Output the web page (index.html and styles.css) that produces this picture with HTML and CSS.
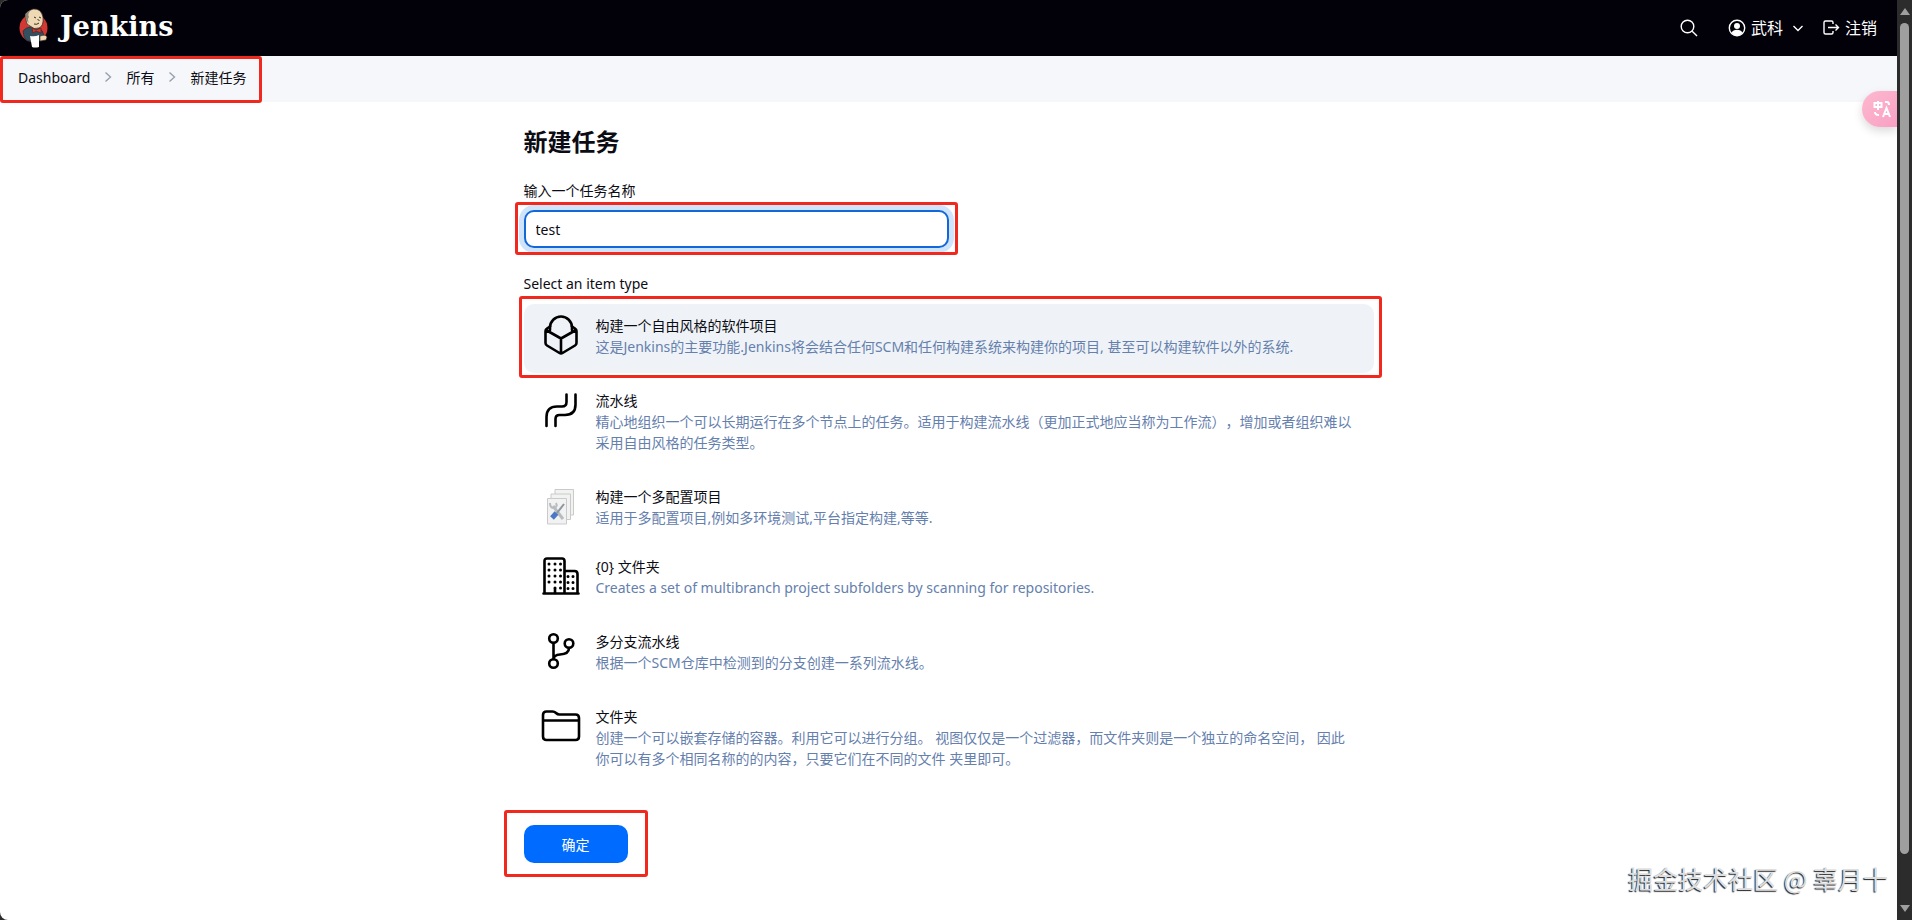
FILE: index.html
```html
<!DOCTYPE html>
<html lang="zh-CN">
<head>
    <meta charset="UTF-8">
    <meta name="viewport" content="width=device-width, initial-scale=1.0">
    <title>新建任务 - Jenkins</title>
    <link rel="stylesheet" href="styles.css">
</head>
<body>
    <div class="page">
        <header class="header">
            <a class="logo" href="#">
                <svg class="logo-img" viewBox="0 0 30 40" aria-hidden="true">
                    <circle cx="15.5" cy="20" r="14" fill="#d33833"/>
                    <path d="M5 23 Q8 19 13 19 L21 20 Q25 22 26 28 L24 33 H9 Q5 29 5 23Z" fill="#34505f" stroke="#1d2b33" stroke-width=".6"/>
                    <path d="M8 12 Q7 3 15 1 Q23 0 25 9 Q26 18 21 20 Q16 22 12 18 Q8 17 8 12Z" fill="#efd9b4" stroke="#3a2c22" stroke-width=".8"/>
                    <path d="M8 12 Q5 4 13 2 Q9 6 11 9 Q9 11 11 15Z" fill="#8a8171"/>
                    <path d="M16 9 l2 1 M21 9 l2 1 M19.500 11 l2 2 M16 16 q3 1 5-1" fill="none" stroke="#3a2c22"/>
                    <path d="M14 20 l4 2 5-2 v5 l-5-2 -3 2Z" fill="#d33833" stroke="#601914" stroke-width=".6"/>
                    <path d="M12 28 q5 1 9-1 v12 q-4 1-7 0Z" fill="#fff"/>
                    <path d="M22 28 q6-2 7 1 l-1 3 -6 1Z" fill="#efd9b4" stroke="#3a2c22" stroke-width=".6"/>
                </svg>
                <span class="logo-text">Jenkins</span>
            </a>
            <nav class="header-links">
                <button class="header-btn search" aria-label="搜索">
                    <svg width="18" height="18" viewBox="0 0 18 18"><circle cx="7.5" cy="7.5" r="6.3"/><path d="M12.2 12.2 L17 17"/></svg>
                </button>
                <a class="header-btn user" href="#">
                    <svg width="18" height="18" viewBox="0 0 18 18"><circle cx="9" cy="9" r="7.7"/><circle class="fill" cx="9" cy="7" r="3"/><path class="fill" d="M3.5 14 Q5 10.800 9 10.800 T14.500 14 Q9 19 3.500 14Z"/></svg>
                    武科
                </a>
                <button class="header-btn caret" aria-label="用户菜单">
                    <svg width="10" height="10" viewBox="0 0 10 10"><path d="M.5 3 L5 7.500 L9.500 3"/></svg>
                </button>
                <a class="header-btn" href="#">
                    <svg width="18" height="18" viewBox="0 0 18 18"><path d="M11 5 V3.500 Q11 2 9.500 2 H3.500 Q2 2 2 3.500 V13.500 Q2 15 3.500 15 H9.500 Q11 15 11 13.500 V12 M6 8.500 H16.500 M13.500 5.500 l3 3 -3 3"/></svg>
                    注销
                </a>
            </nav>
        </header>

        <nav class="breadcrumbs">
            <div class="crumb-list marked">
                <a href="#">Dashboard</a>
                <svg width="8" height="12" viewBox="0 0 8 12"><path d="M1.500 1.500 L6.500 6 L1.500 10.500"/></svg>
                <a href="#">所有</a>
                <svg width="8" height="12" viewBox="0 0 8 12"><path d="M1.500 1.500 L6.500 6 L1.500 10.500"/></svg>
                <a href="#">新建任务</a>
            </div>
        </nav>

        <main class="main">
            <form class="new-item">
                <h1>新建任务</h1>

                <label class="label" for="name">输入一个任务名称</label>
                <div class="name-box marked">
                    <input type="text" id="name" class="name-input" value="test">
                </div>

                <div class="label">Select an item type</div>
                <ul class="items">
                    <li class="item active marked">
                        <svg class="icon" viewBox="0 0 40 40"><path d="M9 15 V12.500 A11 11 0 0 1 31 12.500 V15"/><path d="M5 15 L20 23.500 L35 15 M20 23.500 V38 M9 11.500 L6 13.500 Q4.500 14.500 4.500 16 V28 Q4.500 29.500 6 30.500 L18.500 38 Q20 39 21.500 38 L34 30.500 Q35.500 29.500 35.500 28 V16 Q35.500 14.500 34 13.500 L31 11.500"/></svg>
                        <div class="item-text">
                            <div class="item-title">构建一个自由风格的软件项目</div>
                            <div class="item-desc">这是Jenkins的主要功能.Jenkins将会结合任何SCM和任何构建系统来构建你的项目, 甚至可以构建软件以外的系统.</div>
                        </div>
                    </li>
                    <li class="item">
                        <svg class="icon" viewBox="0 0 40 40"><path d="M5.500 36 V27 Q5.500 16.500 16 16.500 H21 Q25.500 16.500 25.500 12 V4.500 M14.500 36 V29 Q14.500 25 18.500 25 H24 Q34.500 25 34.500 14.500 V4.500"/></svg>
                        <div class="item-text">
                            <div class="item-title">流水线</div>
                            <div class="item-desc">精心地组织一个可以长期运行在多个节点上的任务。适用于构建流水线（更加正式地应当称为工作流），增加或者组织难以采用自由风格的任务类型。</div>
                        </div>
                    </li>
                    <li class="item compact">
                        <svg class="icon matrix" viewBox="0 0 40 40">
                            <g fill="#f1f2f1" stroke="#c9cbc9" stroke-width="1"><path d="M14 3.500 H32.500 V29 H14Z"/><path d="M10 8 H29.500 V33.500 H10Z"/><path d="M6.500 12.500 H25.500 V38 H6.500Z"/></g>
                            <path d="M12 20 L22 33" stroke="#b7bcc0" stroke-width="3"/>
                            <path d="M9 17 q0 5 4 5 q4-1 2-5" stroke="#b7bcc0" stroke-width="2"/>
                            <path d="M23 18 L16 27" stroke="#8e969d" stroke-width="2"/>
                            <path d="M15.500 27 L11 32" stroke="#4a78c4" stroke-width="5"/>
                        </svg>
                        <div class="item-text">
                            <div class="item-title">构建一个多配置项目</div>
                            <div class="item-desc">适用于多配置项目,例如多环境测试,平台指定构建,等等.</div>
                        </div>
                    </li>
                    <li class="item">
                        <svg class="icon" viewBox="0 0 40 40"><path d="M3.500 37.500 V5 Q3.500 2.500 6 2.500 H21 Q23.500 2.500 23.500 5 V37.500 M23.500 15 H33.500 Q36.500 15 36.500 18 V37.500 M2.500 37.500 H37.500"/><path class="dots" d="M8 8 V32 M14 8 V33 M19.500 8 V33 M27 20.500 V33 M32 20.500 V33"/><path d="M14 33 V37"/></svg>
                        <div class="item-text">
                            <div class="item-title">{0} 文件夹</div>
                            <div class="item-desc">Creates a set of multibranch project subfolders by scanning for repositories.</div>
                        </div>
                    </li>
                    <li class="item">
                        <svg class="icon" viewBox="0 0 40 40"><circle cx="12.500" cy="7.500" r="4.300"/><circle cx="12.500" cy="32.500" r="4.300"/><circle cx="28" cy="12.500" r="4.300"/><path d="M12.500 12 V28 Q13 24 19 23.500 Q28 23 28 17"/></svg>
                        <div class="item-text">
                            <div class="item-title">多分支流水线</div>
                            <div class="item-desc">根据一个SCM仓库中检测到的分支创建一系列流水线。</div>
                        </div>
                    </li>
                    <li class="item">
                        <svg class="icon" viewBox="0 0 40 40"><path d="M2 9 Q2 5.500 5.500 5.500 H11.500 Q13.500 5.500 15 7 Q16.500 8.500 18.500 8.500 H34.500 Q38 8.500 38 12 V30.500 Q38 34 34.500 34 H5.500 Q2 34 2 30.500Z M2 14.500 H38"/></svg>
                        <div class="item-text">
                            <div class="item-title">文件夹</div>
                            <div class="item-desc">创建一个可以嵌套存储的容器。利用它可以进行分组。 视图仅仅是一个过滤器，而文件夹则是一个独立的命名空间， 因此你可以有多个相同名称的的内容，只要它们在不同的文件 夹里即可。</div>
                        </div>
                    </li>
                </ul>

                <div class="submit-box marked">
                    <button type="button" class="submit">确定</button>
                </div>
            </form>
        </main>

        <button class="translate" aria-label="翻译">
            <svg width="18" height="18" viewBox="0 0 18 18"><path d="M1.500 3 H8.500 V7 H1.500Z M5 1 V10 M12 2 H14 Q16 2 16 5 M2 12 Q2 15 6 15 M10 17 L13.500 8 L17 17 M11.500 14 H15.500"/></svg>
        </button>
        <div class="watermark">掘金技术社区 @ 辜月十</div>
    </div>

    <div class="scrollbar">
        <span class="arrow-up"></span>
        <span class="thumb"></span>
        <span class="arrow-down"></span>
    </div>
</body>
</html>
```
FILE: styles.css
```css
* {
    box-sizing: border-box;
}
body {
    display: flex;
    min-height: 100vh;
    margin: 0;
    background: #2c2c2c;
    font-family: "Noto Sans", "Noto Sans CJK SC", sans-serif;
    font-size: 14px;
    line-height: 21px;
    text-spacing-trim: space-all;
    color: #0c0c14;
}
a {
    color: inherit;
    text-decoration: none;
}
button, input {
    font: inherit;
}
svg {
    fill: none;
    stroke: currentColor;
    flex-shrink: 0;
}
.page {
    position: relative;
    flex: 1;
    background: #fff;
    border-radius: 8px 0 0 8px;
    overflow: hidden;
}

/* red frames round the steps to follow */
.marked {
    position: relative;
}
.marked::after {
    content: "";
    position: absolute;
    inset: 0;
    border: 3px solid #f0281e;
    border-radius: 3px;
    pointer-events: none;
}

/* header */
.header {
    display: flex;
    justify-content: space-between;
    align-items: center;
    height: 56px;
    padding: 0 20px 0 18px;
    background: #020009;
    color: #fff;
}
.logo {
    display: flex;
    align-items: center;
    gap: 12px;
}
.logo-img {
    width: 30px;
    height: 40px;
    stroke: none;
}
.logo-text {
    padding-bottom: 3px;
    font-family: "DejaVu Serif", serif;
    font-size: 27px;
    font-weight: bold;
    line-height: 40px;
}
.header-links {
    display: flex;
    align-items: center;
}
.header-btn {
    display: flex;
    align-items: center;
    gap: 5px;
    padding: 0;
    border: none;
    background: none;
    color: #fff;
    font-size: 16px;
    cursor: pointer;
}
.header-btn svg {
    stroke-width: 1.4;
}
.header-btn .fill {
    fill: #fff;
    stroke: none;
}
.search {
    margin-right: 30px;
}
.caret {
    margin: 0 19px 0 10px;
}

/* breadcrumbs */
.breadcrumbs {
    display: flex;
    height: 46px;
    background: #f5f7fa;
}
.crumb-list {
    display: flex;
    align-items: center;
    gap: 14px;
    height: 47px;
    padding: 0 16px 5px 18px;
}
.crumb-list svg {
    stroke: #9a9fb0;
    stroke-width: 1.4;
}

/* form */
.main {
    padding: 22px 20px 30px;
}
.new-item {
    max-width: 850px;
    margin: 0 auto;
}
h1 {
    margin: 0 0 20px;
    font-size: 24px;
    line-height: 36px;
}
.label {
    display: block;
}
.name-box {
    width: calc(50% + 18px);
    margin: 1px 0 18px -9px;
    padding: 8px 9px 7px;
}
.name-input {
    display: block;
    width: 100%;
    height: 38px;
    padding: 0 10px;
    border: 2px solid #1168d8;
    border-radius: 10px;
    box-shadow: 0 0 0 5px #cfe4fb;
    outline: none;
    color: inherit;
}
.items {
    display: flex;
    flex-direction: column;
    gap: 6px;
    margin: 10px 0 0;
    padding: 0;
    list-style: none;
}
.item {
    display: flex;
    gap: 15px;
    padding: 11px 20px 16px 17px;
    border-radius: 10px;
    cursor: pointer;
}
.compact {
    padding-bottom: 11px;
}
.active {
    background: #eff3f7;
}
.active::after {
    inset: -8px -8px -5px -5px;
}
.icon {
    width: 40px;
    height: 40px;
    color: #000;
    stroke-width: 2.6;
    stroke-linecap: round;
    stroke-linejoin: round;
}
.dots {
    stroke-width: 3;
    stroke-dasharray: 0 6;
}
.matrix {
    stroke-linecap: butt;
}
.item-desc {
    color: #6580ad;
}
.submit-box {
    width: 144px;
    margin: 25px 0 0 -20px;
    padding: 15px 20px 14px;
}
.submit {
    display: block;
    width: 100%;
    height: 38px;
    border: none;
    border-radius: 10px;
    background: #006bff;
    color: #fff;
    cursor: pointer;
}

/* floating translate button */
.translate {
    position: absolute;
    top: 91px;
    right: 0;
    display: flex;
    align-items: center;
    width: 35px;
    height: 36px;
    padding: 0 0 0 11px;
    border: none;
    border-radius: 18px 0 0 18px;
    background: linear-gradient(135deg, #fdb9cf, #f9a0c3);
    box-shadow: 0 4px 10px rgba(0, 0, 0, 0.15);
    color: #fff;
}
.translate svg {
    stroke-width: 2;
}
.watermark {
    position: absolute;
    right: 9px;
    bottom: 24px;
    color: #dedede;
    font-family: "Noto Sans CJK SC", sans-serif;
    font-size: 25px;
    line-height: 36px;
    text-shadow: -1px 1px 1px #222;
}

/* scrollbar */
.scrollbar {
    display: flex;
    flex-direction: column;
    align-items: center;
    gap: 8px;
    width: 15px;
    padding: 8px 0;
}
.thumb {
    flex: 1;
    width: 9px;
    margin-bottom: 43px;
    border-radius: 5px;
    background: #9f9f9f;
}
.arrow-up, .arrow-down {
    border: 5px solid transparent;
}
.arrow-up {
    border-top: none;
    border-bottom: 7px solid #9f9f9f;
}
.arrow-down {
    border-bottom: none;
    border-top: 7px solid #9f9f9f;
}
```
